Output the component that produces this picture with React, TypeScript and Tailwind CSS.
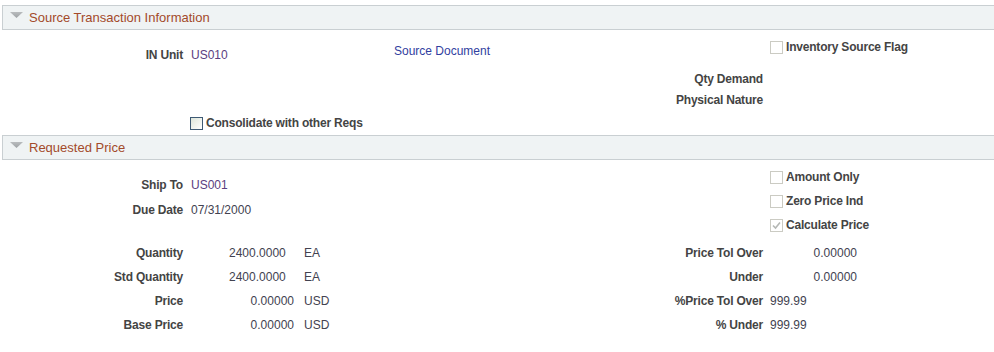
import React from "react";

const LBL = "text-[#444444] font-bold tracking-[-0.2px]";
const VAL = "text-[#424250]";
const PURPLE = "text-[#5a3e80]";

function Header({ title }: { title: string }) {
  return (
    <div className="ml-[2px] flex h-[25px] items-center border border-r-0 border-[#c9cfd2] bg-[#eff3f4]">
      <svg width="13" height="6" viewBox="0 0 13 6" className="ml-[7px] -mt-[6px] shrink-0">
        <defs>
          <linearGradient id="tri" x1="0" y1="0" x2="0" y2="1">
            <stop offset="0" stopColor="#b9bcbe" />
            <stop offset="1" stopColor="#9ea2a5" />
          </linearGradient>
        </defs>
        <path d="M0 0 H13 L6.5 6 Z" fill="url(#tri)" />
      </svg>
      <span className="ml-[6px] text-[13px] leading-[15px] text-[#a34a2a]">{title}</span>
    </div>
  );
}

function Box({ kind }: { kind: "disabled" | "enabled" | "checked" }) {
  if (kind === "enabled") {
    return (
      <span className="block h-[13px] w-[13px] shrink-0 border border-[#3e5a74] bg-gradient-to-br from-[#dde5da] to-[#ffffff]" />
    );
  }
  return (
    <span className="relative block h-[13px] w-[13px] shrink-0 border border-[#cbcbc3] bg-white">
      {kind === "checked" && (
        <svg width="11" height="11" viewBox="0 0 11 11" className="absolute left-0 top-0">
          <path d="M2 5.5 L4.5 8 L9 2.5" fill="none" stroke="#b5b8b5" strokeWidth="1.6" />
        </svg>
      )}
    </span>
  );
}

function Check({ kind, label, pl, h = "h-[24px]" }: { kind: "disabled" | "enabled" | "checked"; label: string; pl: string; h?: string }) {
  return (
    <div className={`flex ${h} items-center gap-[3px] ${pl}`}>
      <Box kind={kind} />
      <span className={LBL}>{label}</span>
    </div>
  );
}

function LeftRow({ label, children, extra = "" }: { label: string; children?: React.ReactNode; extra?: string }) {
  return (
    <div className={`flex h-[24px] items-center ${extra}`}>
      <div className={`w-[183px] shrink-0 text-right ${LBL}`}>{label}</div>
      {children}
    </div>
  );
}

function RightRow({ label, children, extra = "" }: { label: string; children?: React.ReactNode; extra?: string }) {
  return (
    <div className={`flex h-[24px] items-center ${extra}`}>
      <div className={`w-[123px] shrink-0 text-right ${LBL}`}>{label}</div>
      {children}
    </div>
  );
}

export default function App() {
  return (
    <div className="h-[352px] w-[994px] overflow-hidden bg-white pt-[5px] font-['Liberation_Sans',Arial,sans-serif] text-[12px] leading-[14px]">
      <Header title="Source Transaction Information" />
      <div className="flex h-[105px]">
        <div className="w-[394px] shrink-0 pt-[13px]">
          <LeftRow label="IN Unit">
            <span className={`ml-[8px] ${PURPLE}`}>US010</span>
          </LeftRow>
          <Check kind="enabled" label="Consolidate with other Reqs" pl="pl-[190px]" h="h-[24px] mt-[44px]" />
        </div>
        <div className="w-[246px] shrink-0 pt-[9px]">
          <div className="flex h-[24px] items-center text-[#3140a0]">Source Document</div>
        </div>
        <div className="flex-1 pt-[5px]">
          <Check kind="disabled" label="Inventory Source Flag" pl="pl-[130px]" />
          <RightRow label="Qty Demand" extra="mt-[8px]" />
          <RightRow label="Physical Nature" extra="-mt-[3px]" />
        </div>
      </div>

      <Header title="Requested Price" />
      <div className="flex">
        <div className="w-[640px] shrink-0 pt-[13px]">
          <LeftRow label="Ship To">
            <span className={`ml-[8px] ${PURPLE}`}>US001</span>
          </LeftRow>
          <LeftRow label="Due Date" extra="mt-[1px]">
            <span className={`ml-[8px] ${VAL}`}>07/31/2000</span>
          </LeftRow>
        </div>
        <div className="flex-1 pt-[5px]">
          <Check kind="disabled" label="Amount Only" pl="pl-[130px]" />
          <Check kind="disabled" label="Zero Price Ind" pl="pl-[130px]" />
          <Check kind="checked" label="Calculate Price" pl="pl-[130px]" />
        </div>
      </div>

      <div className="mt-[4px] flex">
        <div className="w-[640px] shrink-0">
          <LeftRow label="Quantity">
            <span className={`ml-[8px] w-[103px] pl-[38px] ${VAL}`}>2400.0000</span>
            <span className={`ml-[10px] ${VAL}`}>EA</span>
          </LeftRow>
          <LeftRow label="Std Quantity">
            <span className={`ml-[8px] w-[103px] pl-[38px] ${VAL}`}>2400.0000</span>
            <span className={`ml-[10px] ${VAL}`}>EA</span>
          </LeftRow>
          <LeftRow label="Price">
            <span className={`ml-[8px] w-[103px] text-right ${VAL}`}>0.00000</span>
            <span className={`ml-[10px] ${VAL}`}>USD</span>
          </LeftRow>
          <LeftRow label="Base Price">
            <span className={`ml-[8px] w-[103px] text-right ${VAL}`}>0.00000</span>
            <span className={`ml-[10px] ${VAL}`}>USD</span>
          </LeftRow>
        </div>
        <div className="flex-1">
          <RightRow label="Price Tol Over">
            <span className={`ml-[7px] w-[87px] text-right ${VAL}`}>0.00000</span>
          </RightRow>
          <RightRow label="Under">
            <span className={`ml-[7px] w-[87px] text-right ${VAL}`}>0.00000</span>
          </RightRow>
          <RightRow label="%Price Tol Over">
            <span className={`ml-[7px] ${VAL}`}>999.99</span>
          </RightRow>
          <RightRow label="% Under">
            <span className={`ml-[7px] ${VAL}`}>999.99</span>
          </RightRow>
        </div>
      </div>
    </div>
  );
}
